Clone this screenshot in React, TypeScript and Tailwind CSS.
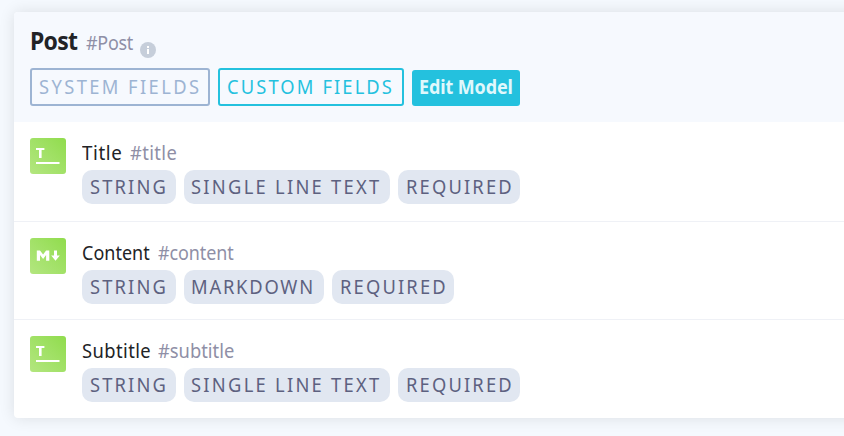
import React from "react";

type TagSpec = { label: string; className: string; textClass: string };
type FieldSpec = {
  name: string;
  nameClass: string;
  nameWidth: string;
  api: string;
  apiClass: string;
  icon: "text" | "markdown";
  rowClass: string;
  tags: TagSpec[];
};

const STRING_TAG: TagSpec = { label: "STRING", className: "w-[94px] pl-2", textClass: "tracking-[2.28px]" };
const LINE_TAG: TagSpec = { label: "SINGLE LINE TEXT", className: "w-[206px] pl-[7px]", textClass: "tracking-[2.42px]" };
const MARKDOWN_TAG: TagSpec = { label: "MARKDOWN", className: "w-[140px] pl-[7px]", textClass: "tracking-[1.9px]" };
const REQUIRED_TAG: TagSpec = { label: "REQUIRED", className: "w-[122px] pl-2", textClass: "tracking-[2.3px]" };

const FIELDS: FieldSpec[] = [
  {
    name: "Title",
    nameClass: "scale-x-[0.96] tracking-[0.65px]",
    nameWidth: "w-[48px]",
    api: "#title",
    apiClass: "scale-x-[0.94] tracking-[0.4px]",
    icon: "text",
    rowClass: "h-[100px] border-b border-[#eff1f6]",
    tags: [STRING_TAG, LINE_TAG, REQUIRED_TAG],
  },
  {
    name: "Content",
    nameClass: "scale-x-[0.92] tracking-[0.05px]",
    nameWidth: "w-[76px]",
    api: "#content",
    apiClass: "scale-x-[0.92] tracking-[-0.1px]",
    icon: "markdown",
    rowClass: "h-[98px] border-b border-[#eff1f6]",
    tags: [STRING_TAG, MARKDOWN_TAG, REQUIRED_TAG],
  },
  {
    name: "Subtitle",
    nameClass: "scale-x-[0.94] tracking-[0.45px]",
    nameWidth: "w-[76px]",
    api: "#subtitle",
    apiClass: "scale-x-[0.94] tracking-[0px]",
    icon: "text",
    rowClass: "h-[98px]",
    tags: [STRING_TAG, LINE_TAG, REQUIRED_TAG],
  },
];

function FieldIcon({ kind }: { kind: "text" | "markdown" }) {
  return (
    <div className="size-9 shrink-0 rounded-[3px] bg-linear-to-tr from-[#b3e67f] to-[#90dc4c]">
      <svg viewBox="0 0 36 36" className="size-9" fill="white">
        {kind === "text" ? (
          <>
            <rect x="6" y="10" width="8.4" height="2" />
            <rect x="9" y="10" width="2.6" height="10" />
            <rect x="6" y="24" width="23.5" height="2" />
          </>
        ) : (
          <>
            <path d="M6.8 22.7V12.5H10l3.1 4 3-4h3.2v10.2h-3.2V17l-3 3.9L10 17v5.7z" />
            <path d="M24 12.5h3v5h2.8l-4.3 5.3-4.3-5.3H24z" />
          </>
        )}
      </svg>
    </div>
  );
}

function Tag({ label, className, textClass }: TagSpec) {
  return (
    <div className={`flex h-[34px] items-center rounded-[10px] bg-[#e1e7f1] text-[19.5px] leading-none text-[#5d6180] ${className}`}>
      <span className={`origin-left scale-x-[0.94] ${textClass}`}>{label}</span>
    </div>
  );
}

function FieldRow({ field }: { field: FieldSpec }) {
  return (
    <div className={`flex gap-4 px-4 pt-4 ${field.rowClass}`}>
      <FieldIcon kind={field.icon} />
      <div>
        <div className="flex h-8 items-center pb-0.5 text-[19.5px] leading-none">
          <div className={`text-[#222326] ${field.nameWidth}`}>
            <span className={`inline-block origin-left ${field.nameClass}`}>{field.name}</span>
          </div>
          <span className={`origin-left text-[#8f8fa6] ${field.apiClass}`}>{field.api}</span>
        </div>
        <div className="flex gap-2">
          {field.tags.map((tag) => (
            <Tag key={tag.label} {...tag} />
          ))}
        </div>
      </div>
    </div>
  );
}

export default function App() {
  return (
    <div className="h-[436px] w-[844px] overflow-hidden bg-[#f5f9fe] pt-3 pl-3.5 font-['Noto_Sans',sans-serif] whitespace-nowrap">
      <div className="h-[406px] w-[900px] overflow-hidden rounded-[4px] bg-white shadow-[0_0_16px_rgba(0,0,0,0.11)]">
        <header className="h-[110px] bg-[#f6f9fe] px-4">
          <div className="flex h-14 items-center leading-none">
            <div className="mt-0.5 w-[56px] text-[25.5px] font-bold text-[#222326]">
              <span className="inline-block origin-left scale-x-[0.9] tracking-[-0.75px]">Post</span>
            </div>
            <div className="mt-1.5 w-[54px] text-[19.5px] text-[#8f8fa6]">
              <span className="inline-block origin-left scale-x-[0.92] tracking-[-0.3px]">#Post</span>
            </div>
            <svg viewBox="0 0 16 16" className="mt-[19px] size-4">
              <circle cx="8" cy="8" r="8" fill="#c6ceda" />
              <path d="M7 4h2v2H7zM7 7h2v5H7z" fill="white" />
            </svg>
          </div>
          <div className="flex items-end gap-2">
            <div className="flex h-[38px] w-[180px] items-center rounded-[3px] border-2 border-[#9db4d3] pl-[7px] text-[19.5px] leading-none text-[#9db4d3]">
              <span className="origin-left scale-x-[0.94] tracking-[2.55px]">SYSTEM FIELDS</span>
            </div>
            <div className="flex h-[38px] w-[186px] items-center rounded-[3px] border-2 border-[#24c1de] pl-[7px] text-[19.5px] leading-none text-[#24c1de]">
              <span className="origin-left scale-x-[0.94] tracking-[2.25px]">CUSTOM FIELDS</span>
            </div>
            <div className="flex h-9 w-[108px] items-center rounded-[3px] bg-[#24c1de] pb-0.5 pl-[7px] text-[19.5px] leading-none font-bold text-[#e0f8fc]">
              <span className="origin-left scale-x-[0.92] tracking-[-0.1px]">Edit Model</span>
            </div>
          </div>
        </header>
        {FIELDS.map((field) => (
          <FieldRow key={field.name} field={field} />
        ))}
      </div>
    </div>
  );
}
